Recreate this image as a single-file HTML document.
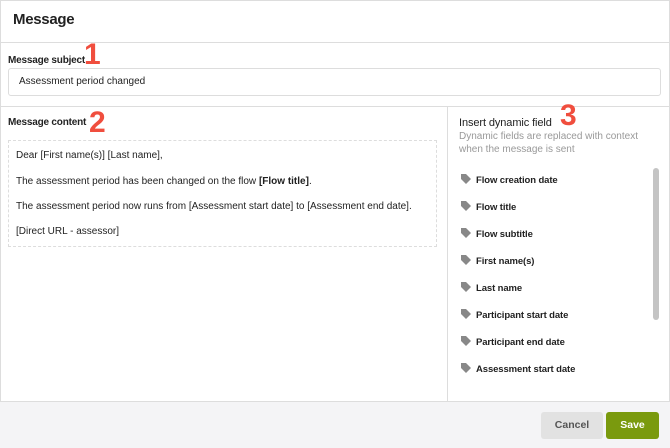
<!DOCTYPE html>
<html><head><style>
*{box-sizing:border-box;margin:0;padding:0}
body{width:670px;height:448px;overflow:hidden;background:#fff;font-family:"Liberation Sans",sans-serif;color:#222;position:relative}
.a{position:absolute}
.t{font-size:10px;letter-spacing:0}
.b{font-weight:bold}
.n{color:#f04e3e;font-size:30px;font-weight:bold;line-height:1}
.item{position:absolute;left:462px;font-size:9.5px;font-weight:bold;letter-spacing:-0.1px}
.tag{position:absolute;left:-2px;top:-2px;width:12px;height:12px}
.item span{margin-left:14px}
</style></head><body>
<div class="a" style="left:0;top:0;width:670px;height:448px;border:1px solid #ddd"></div>
<div class="a b" style="left:13px;top:11px;font-size:15px;letter-spacing:-0.3px">Message</div>
<div class="a" style="left:0;top:42px;width:670px;height:1px;background:#ddd"></div>
<div class="a t b" style="left:8px;top:55px;letter-spacing:-0.2px">Message subject</div>
<div class="a n" style="left:84px;top:40px">1</div>
<div class="a" style="left:8px;top:68px;width:653px;height:28px;border:1px solid #ddd;border-radius:3px"></div>
<div class="a t" style="left:19px;top:76px">Assessment period changed</div>
<div class="a" style="left:0;top:106px;width:670px;height:1px;background:#ddd"></div>
<div class="a" style="left:447px;top:106px;width:1px;height:295px;background:#ddd"></div>
<div class="a t b" style="left:8px;top:117px;letter-spacing:-0.2px">Message content</div>
<div class="a n" style="left:89px;top:108px">2</div>
<div class="a" style="left:8px;top:140px;width:429px;height:107px;border:1px dashed #ddd"></div>
<div class="a t" style="left:16px;top:150px">Dear [First name(s)] [Last name],</div>
<div class="a t" style="left:16px;top:176px">The assessment period has been changed on the flow <b>[Flow title]</b>.</div>
<div class="a t" style="left:16px;top:201px">The assessment period now runs from [Assessment start date] to [Assessment end date].</div>
<div class="a t" style="left:16px;top:226px">[Direct URL - assessor]</div>
<div class="a" style="left:459px;top:117px;font-size:11px;letter-spacing:-0.1px">Insert dynamic field</div>
<div class="a n" style="left:560px;top:101px">3</div>
<div class="a" style="left:459px;top:130px;color:#999;line-height:13px;font-size:10px">Dynamic fields are replaced with context<br>when the message is sent</div>
<div class="a" style="left:653px;top:168px;width:6px;height:152px;background:#c4c4c4;border-radius:3px"></div>
<div class="a" style="left:0;top:401px;width:670px;height:47px;background:#f4f4f6;border-top:1px solid #ddd"></div>
<div class="a" style="left:541px;top:412px;width:62px;height:27px;background:#e2e2e2;border-radius:3px;color:#555;font-size:10.5px;font-weight:bold;text-align:center;line-height:27px">Cancel</div>
<div class="a" style="left:606px;top:412px;width:53px;height:27px;background:#7a9a0e;border-radius:3px;color:#fff;font-size:10.5px;font-weight:bold;text-align:center;line-height:27px">Save</div>
<div class="item" style="top:175px"><svg class="tag" viewBox="0 0 12 12"><path d="M1 1h5l5 5-5 5-5-5z" fill="#888"/></svg><span>Flow creation date</span></div>
<div class="item" style="top:202px"><svg class="tag" viewBox="0 0 12 12"><path d="M1 1h5l5 5-5 5-5-5z" fill="#888"/></svg><span>Flow title</span></div>
<div class="item" style="top:229px"><svg class="tag" viewBox="0 0 12 12"><path d="M1 1h5l5 5-5 5-5-5z" fill="#888"/></svg><span>Flow subtitle</span></div>
<div class="item" style="top:256px"><svg class="tag" viewBox="0 0 12 12"><path d="M1 1h5l5 5-5 5-5-5z" fill="#888"/></svg><span>First name(s)</span></div>
<div class="item" style="top:283px"><svg class="tag" viewBox="0 0 12 12"><path d="M1 1h5l5 5-5 5-5-5z" fill="#888"/></svg><span>Last name</span></div>
<div class="item" style="top:310px"><svg class="tag" viewBox="0 0 12 12"><path d="M1 1h5l5 5-5 5-5-5z" fill="#888"/></svg><span>Participant start date</span></div>
<div class="item" style="top:337px"><svg class="tag" viewBox="0 0 12 12"><path d="M1 1h5l5 5-5 5-5-5z" fill="#888"/></svg><span>Participant end date</span></div>
<div class="item" style="top:364px"><svg class="tag" viewBox="0 0 12 12"><path d="M1 1h5l5 5-5 5-5-5z" fill="#888"/></svg><span>Assessment start date</span></div>
</body></html>
